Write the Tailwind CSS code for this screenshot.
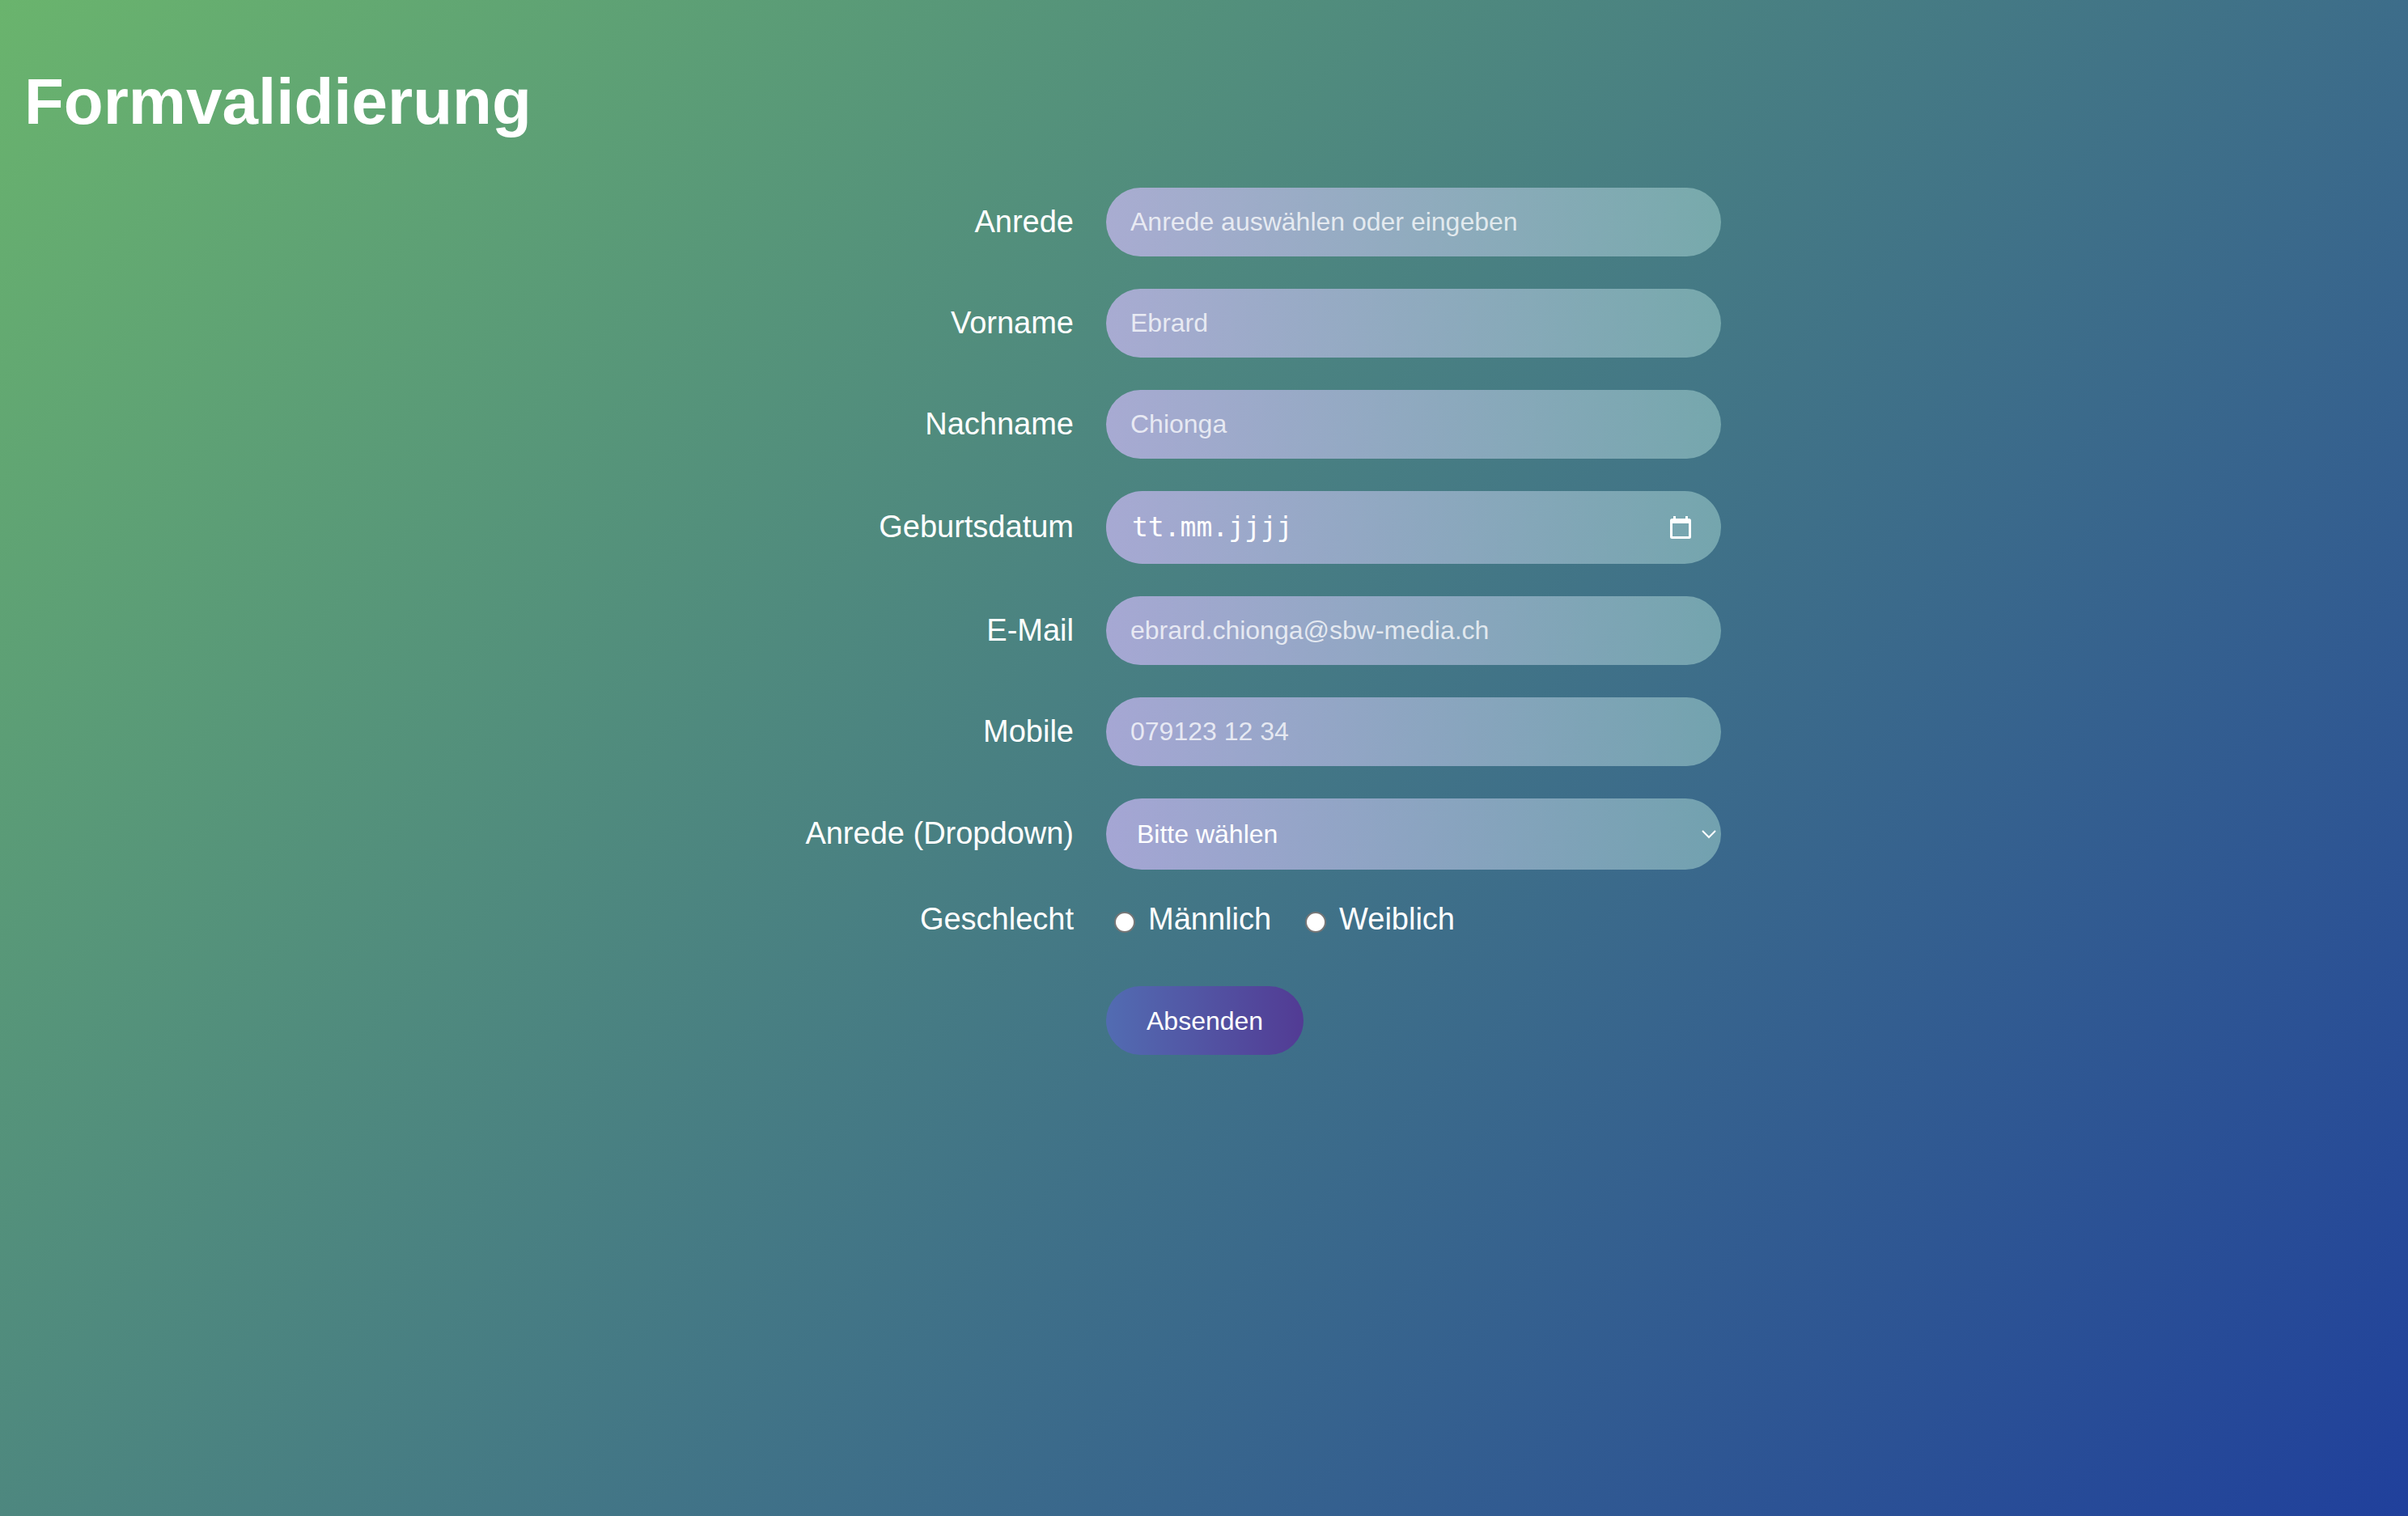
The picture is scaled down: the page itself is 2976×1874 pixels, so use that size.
<!DOCTYPE html>
<html lang="de">
<head>
<meta charset="utf-8">
<meta name="viewport" content="width=device-width, initial-scale=1">
<title>Formvalidierung</title>
<script src="https://cdn.jsdelivr.net/npm/@tailwindcss/browser@4"></script>
</head>
<body class="min-h-screen bg-linear-[135deg,#6ab46d,#20409c] px-[30px] pt-20 pb-20 font-['Liberation_Sans',Arial,sans-serif] text-[38px] leading-[42px] text-white">
  <h1 class="text-[80px] leading-[92px] font-bold">Formvalidierung</h1>

  <form class="mx-auto mt-[60px] grid max-w-[1278px] grid-cols-[1fr_760px] items-center gap-10">
    <label for="anrede" class="pb-0.5 text-right">Anrede</label>
    <input id="anrede" type="text" placeholder="Anrede auswählen oder eingeben" class="h-[85px] w-full rounded-full bg-linear-[90deg,rgba(216,189,255,0.65),rgba(160,208,204,0.55)] px-[30px] text-[32px] outline-none placeholder:text-white/75">

    <label for="vorname" class="pb-0.5 text-right">Vorname</label>
    <input id="vorname" type="text" placeholder="Ebrard" class="h-[85px] w-full rounded-full bg-linear-[90deg,rgba(216,189,255,0.65),rgba(160,208,204,0.55)] px-[30px] text-[32px] outline-none placeholder:text-white/75">

    <label for="nachname" class="pb-0.5 text-right">Nachname</label>
    <input id="nachname" type="text" placeholder="Chionga" class="h-[85px] w-full rounded-full bg-linear-[90deg,rgba(216,189,255,0.65),rgba(160,208,204,0.55)] px-[30px] text-[32px] outline-none placeholder:text-white/75">

    <label for="geburtsdatum" class="pb-0.5 text-right">Geburtsdatum</label>
    <div class="flex h-[90px] items-center rounded-full bg-linear-[90deg,rgba(216,189,255,0.65),rgba(160,208,204,0.55)] pr-9 pl-8">
      <input id="geburtsdatum" type="text" inputmode="numeric" placeholder="tt.mm.jjjj" class="min-w-0 flex-1 bg-transparent font-['DejaVu_Sans_Mono',monospace] text-[33px] outline-none placeholder:text-white">
      <button type="button" aria-label="Kalender öffnen">
        <svg class="block h-7 w-[28px]" viewBox="0 0 28 28" fill="none">
          <path fill="white" fill-rule="evenodd" d="M5 0h3v3h12V0h3v3h1.500a2.500 2.500 0 0 1 2.500 2.500v20a2.500 2.500 0 0 1-2.500 2.500h-21A2.500 2.500 0 0 1 1 25.500v-20A2.500 2.500 0 0 1 3.500 3H5zM4 9v16h20V9z"/>
        </svg>
      </button>
    </div>

    <label for="email" class="pb-0.5 text-right">E-Mail</label>
    <input id="email" type="email" placeholder="ebrard.chionga@sbw-media.ch" class="h-[85px] w-full rounded-full bg-linear-[90deg,rgba(216,189,255,0.65),rgba(160,208,204,0.55)] px-[30px] text-[32px] outline-none placeholder:text-white/75">

    <label for="mobile" class="pb-0.5 text-right">Mobile</label>
    <input id="mobile" type="tel" placeholder="079123 12 34" class="h-[85px] w-full rounded-full bg-linear-[90deg,rgba(216,189,255,0.65),rgba(160,208,204,0.55)] px-[30px] text-[32px] outline-none placeholder:text-white/75">

    <label for="anrede-auswahl" class="pb-0.5 text-right">Anrede (Dropdown)</label>
    <div class="relative">
      <select id="anrede-auswahl" class="block h-[88px] w-full appearance-none rounded-full bg-linear-[90deg,rgba(216,189,255,0.65),rgba(160,208,204,0.55)] px-[38px] text-[32px] outline-none">
        <option>Bitte wählen</option>
        <option>Herr</option>
        <option>Frau</option>
      </select>
      <svg class="pointer-events-none absolute inset-y-0 right-1.5 my-auto h-3 w-[18px]" viewBox="0 0 18 12" fill="none" stroke="white" stroke-width="2">
        <path d="M1 2l8 8 8-8"/>
      </svg>
    </div>

    <span id="geschlecht" class="pb-0.5 text-right">Geschlecht</span>
    <div role="radiogroup" aria-labelledby="geschlecht" class="flex gap-[42px] pl-2.5">
      <label class="flex items-end gap-4 pb-0.5">
        <input type="radio" name="geschlecht" value="m" class="mb-1 size-[26px] appearance-none rounded-full border-2 border-[#767676] bg-white checked:border-8">
        Männlich
      </label>
      <label class="flex items-end gap-4 pb-0.5">
        <input type="radio" name="geschlecht" value="w" class="mb-1 size-[26px] appearance-none rounded-full border-2 border-[#767676] bg-white checked:border-8">
        Weiblich
      </label>
    </div>

    <button type="submit" class="col-start-2 mt-5 h-[85px] justify-self-start rounded-full bg-linear-[90deg,#526cb2,#523b94] px-[50px] text-[32px]">Absenden</button>
  </form>
</body>
</html>
